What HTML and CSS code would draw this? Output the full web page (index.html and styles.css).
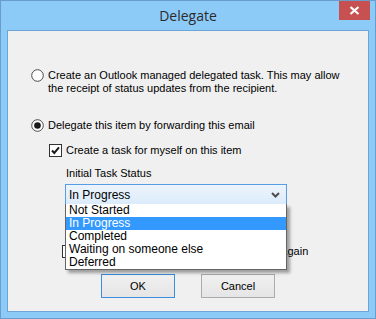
FILE: index.html
```html
<!DOCTYPE html>
<html lang="en">
  <head>
    <meta charset="UTF-8" />
    <title>Delegate</title>
    <link rel="stylesheet" href="styles.css">
  </head>
  <body>
    <div class="window">
      <div class="titlebar">
        <span></span>
        <span class="title">Delegate</span>
        <button class="close-btn">
          <svg width="11" height="9" viewBox="0 0 11 9">
            <path d="M1.5 1 L9.5 8 M9.5 1 L1.5 8" stroke="#fff" stroke-width="2.2" />
          </svg>
        </button>
      </div>

      <div class="client">
        <div class="option option-first">
          <svg class="radio" width="13" height="13" viewBox="0 0 13 13">
            <circle cx="6.5" cy="6.5" r="5.8" fill="#fff" stroke="#4a4a4a" stroke-width="1" />
          </svg>
          <span>Create an Outlook managed delegated task. This may allow<br>the receipt of status updates from the recipient.</span>
        </div>

        <div class="option option-second">
          <svg class="radio" width="13" height="13" viewBox="0 0 13 13">
            <circle cx="6.5" cy="6.5" r="5.8" fill="#fff" stroke="#4a4a4a" stroke-width="1" />
            <circle cx="6.5" cy="6.5" r="3.3" fill="#1a1a1a" />
          </svg>
          <span>Delegate this item by forwarding this email</span>
        </div>

        <div class="option option-check">
          <svg class="check" width="13" height="13" viewBox="0 0 13 13">
            <rect x="0.5" y="0.5" width="12" height="12" fill="#fff" stroke="#333" />
            <path d="M3 6.5 L5.3 9 L10 3.3" fill="none" stroke="#1a1a1a" stroke-width="2" />
          </svg>
          <span>Create a task for myself on this item</span>
        </div>

        <div class="status-label">Initial Task Status</div>

        <div class="combo">
          <span>In Progress</span>
          <svg width="9" height="6" viewBox="0 0 9 6">
            <path d="M1 1 L4.5 4.5 L8 1" fill="none" stroke="#4d4d4d" stroke-width="2" />
          </svg>

          <ul class="combo-list">
            <li>Not Started</li>
            <li class="selected">In Progress</li>
            <li>Completed</li>
            <li>Waiting on someone else</li>
            <li>Deferred</li>
          </ul>
        </div>

        <div class="option option-hidden">
          <svg class="check" width="13" height="13" viewBox="0 0 13 13">
            <rect x="0.5" y="0.5" width="12" height="12" fill="#fff" stroke="#333" />
          </svg>
          <span>Remember my choice and do not show it again</span>
        </div>

        <div class="buttons">
          <button class="btn btn-default">OK</button>
          <button class="btn">Cancel</button>
        </div>
      </div>
    </div>
  </body>
</html>
```

FILE: styles.css
```css
body {
  margin: 0;
  font-family: "Liberation Sans", Arial, sans-serif;
  font-size: 11px;
  color: #000;
}

.window {
  width: 376px;
  height: 319px;
  box-sizing: border-box;
  border: 1px solid #6a9ccc;
  background-color: #8ccaf8;

  display: flex;
  flex-direction: column;
}

.titlebar {
  height: 29px;
  display: grid;
  grid-template-columns: 1fr auto 1fr;
}

.title {
  font-family: "Open Sans", sans-serif;
  font-size: 14px;
  color: #2b2b2b;
  line-height: 29px;
}

.close-btn {
  justify-self: end;
  align-self: start;
  width: 31px;
  height: 19px;
  margin-right: 5px;
  padding: 0;
  border: none;
  background-color: #c75050;

  display: flex;
  justify-content: center;
  align-items: center;
}

.client {
  flex: 1;
  margin: 0 6px 6px;
  border: 1px solid #6ea5d8;
  background-color: #f0f0f0;
  padding-left: 23px;

  display: flex;
  flex-direction: column;
  align-items: flex-start;
}

.option {
  display: flex;
  gap: 4px;
  line-height: 13px;
  white-space: nowrap;
}

.radio,
.check {
  flex: none;
}

.option-first {
  margin-top: 38px;
}

.option-second {
  margin-top: 24px;
}

.option-check {
  margin-top: 12px;
  margin-left: 18px;
}

.status-label {
  margin-top: 10px;
  margin-left: 35px;
  line-height: 13px;
}

.combo {
  position: relative;
  margin-top: 4px;
  margin-left: 34px;
  width: 222px;
  height: 21px;
  box-sizing: border-box;
  border: 1px solid #569de5;
  background: linear-gradient(#ecf4fc, #dcecfc);
  padding: 0 6px 0 3px;

  display: flex;
  justify-content: space-between;
  align-items: center;
  font-size: 12px;
}

.combo-list {
  position: absolute;
  top: 100%;
  left: -1px;
  right: -1px;
  margin: 0;
  padding: 0;
  list-style: none;
  background-color: #fff;
  border: 1px solid #646464;
  border-top: none;
  box-shadow: 3px 3px 3px rgba(0, 0, 0, 0.35);
  z-index: 2;
}

.combo-list li {
  height: 13px;
  line-height: 13px;
  padding-left: 3px;
  font-size: 12px;
}

.combo-list .selected {
  background-color: #3399ff;
  color: #fff;
}

.option-hidden {
  margin-top: 40px;
  margin-left: 31px;
}

.buttons {
  align-self: center;
  margin-top: 16px;
  margin-left: -23px;
  display: flex;
  gap: 26px;
}

.btn {
  width: 74px;
  height: 24px;
  padding: 0;
  border: 1px solid #acacac;
  background: linear-gradient(#f0f0f0, #e5e5e5);
  font-family: "Liberation Sans", Arial, sans-serif;
  font-size: 11px;
  color: #000;
}

.btn-default {
  border-color: #3c8fe0;
}
```
